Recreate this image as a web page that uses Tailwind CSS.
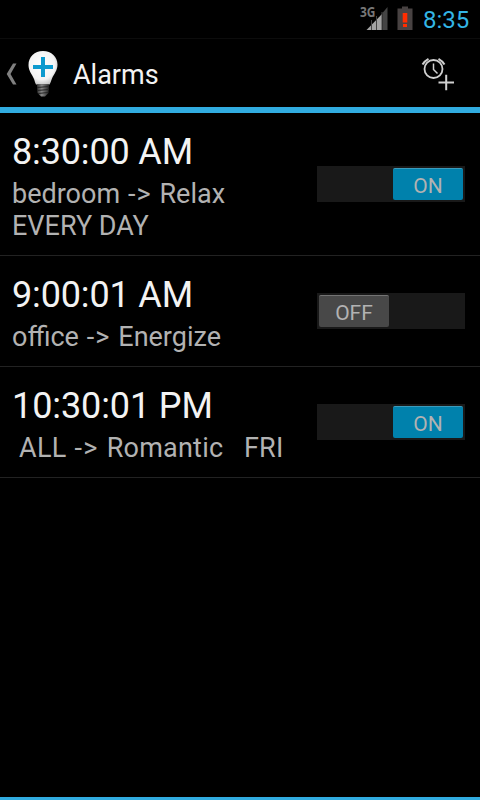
<!DOCTYPE html>
<html lang="en">
<head>
<meta charset="utf-8">
<title>Alarms</title>
<script src="https://cdn.jsdelivr.net/npm/@tailwindcss/browser@4"></script>
</head>
<body class="bg-black">
<div class="w-[480px] h-[800px] bg-black flex flex-col overflow-hidden font-[Roboto,sans-serif] text-[#f3f3f3]">
  <div class="h-[38px] shrink-0 flex justify-end items-start pr-[10px]">
    <svg class="w-[30px] h-[38px]" viewBox="0 0 30 38">
      <text x="2" y="17" font-family="Open Sans, sans-serif" font-weight="700" font-size="13.500" textLength="15.500" lengthAdjust="spacingAndGlyphs" fill="#777">3G</text>
      <path d="M8.500 30 24 14V30Z" fill="#a3a3a3"/>
      <path d="M24.500 13 29.500 7V30H24.500Z" fill="#444"/>
      <path d="M13.500 20V30M18.500 16V30M24 12V30" stroke="#444" stroke-width="1"/>
    </svg>
    <svg class="w-[16px] h-[38px] ml-[9px]" viewBox="0 0 16 38">
      <path d="M5 6.500h6v2h4.500v21.500H.5V8.500H5Z" fill="#484242"/>
      <path d="M5.700 13h4.600V22.500H5.700ZM6 24h4V27h-4Z" fill="#ff2d00"/>
    </svg>
    <div class="ml-[10px] mt-[5px] w-[47px] text-[24px] leading-[30px] text-[#33b5e5] whitespace-nowrap">8:35</div>
  </div>
  <div class="h-[75px] shrink-0 border-t border-t-[#0c0c0c] border-b-[6px] border-b-[#31ace0] flex items-center">
    <svg class="w-[70px] h-[68px] shrink-0" viewBox="0 0 70 68">
      <defs>
        <radialGradient id="bulb" cx=".45" cy=".4" r=".65"><stop offset="0" stop-color="#fff"/><stop offset=".7" stop-color="#f3f3f3"/><stop offset="1" stop-color="#bdbdbd"/></radialGradient>
        <linearGradient id="base"><stop offset="0" stop-color="#333"/><stop offset=".4" stop-color="#888"/><stop offset="1" stop-color="#222"/></linearGradient>
      </defs>
      <path d="M13 24.500H16.500L10.500 35 16.500 45.500H13L6.700 35Z" fill="#808080"/>
      <path d="M43 12C34.500 12 28.500 18 28.500 26C28.500 32 32 35 34 40C35 42.500 35 44 36 45.500H49.500C50.500 44 51 42 52 39.500C54 35 57.500 31.500 57.500 25.500C57.500 18 51.500 12 43 12Z" fill="url(#bulb)"/>
      <path d="M37 45.500H49L48.500 54 45 57.500H41L37.500 54Z" fill="url(#base)"/>
      <path d="M37 48.500 49 47.500M37 51.500 49 50.500M38 54.500 48 53.500" stroke="#252525" stroke-width="1"/>
      <path d="M33 28H53M43 18V38" stroke="#0d9ace" stroke-width="4" fill="none"/>
    </svg>
    <div class="ml-[3px] mt-[3px] text-[27px] leading-[32px]">Alarms</div>
    <svg class="w-[40px] h-[40px] ml-auto mr-[22px]" viewBox="0 0 40 40" fill="none" stroke="#d0d0d0">
      <circle cx="15.500" cy="16" r="9" stroke-width="1.800"/>
      <path d="M15.500 10.500V16.500L19.500 20.500" stroke-width="1.500"/>
      <path d="M4.500 11.500Q6.500 8 10.500 5.800M20.500 5.800Q24.500 8 26.500 11.500" stroke-width="2"/>
      <path d="M20.500 29.500H36M28.200 21.700V37.300" stroke-width="2"/>
    </svg>
  </div>
  <div class="h-[143px] shrink-0 border-b border-[#222] flex items-center justify-between pl-[12px] pr-[15px]">
    <div class="pt-[5px]">
      <div class="text-[36px] leading-[42px] tracking-[-0.15px]">8:30:00 AM</div>
      <div class="mt-[5px] -mb-[5px] pb-[5px] text-[27px] leading-[32px] text-[#b2b2b2]">bedroom<span class="tracking-[1.1px]"> -&gt; </span>Relax<br>EVERY DAY</div>
    </div>
    <div class="w-[148px] h-[36px] bg-[#191919] flex justify-end p-[2px]">
      <div class="w-[70px] h-[32px] rounded-[2px] bg-[#0081ac] border-t border-[#3c9cbd] text-[#b2b2b2] text-[21px] leading-[35px] text-center">ON</div>
    </div>
  </div>
  <div class="h-[111px] shrink-0 border-b border-[#222] flex items-center justify-between pl-[12px] pr-[15px]">
    <div class="pt-[5px]">
      <div class="text-[36px] leading-[42px] tracking-[-0.15px]">9:00:01 AM</div>
      <div class="mt-[5px] -mb-[5px] pb-[5px] text-[27px] leading-[32px] text-[#b2b2b2]">office<span class="tracking-[1.1px]"> -&gt; </span>Energize</div>
    </div>
    <div class="w-[148px] h-[36px] bg-[#191919] flex p-[2px]">
      <div class="w-[70px] h-[32px] rounded-[2px] bg-[#484848] border-t border-[#747474] text-[#b2b2b2] text-[21px] leading-[35px] text-center">OFF</div>
    </div>
  </div>
  <div class="h-[111px] shrink-0 border-b border-[#222] flex items-center justify-between pl-[12px] pr-[15px]">
    <div class="pt-[5px]">
      <div class="text-[36px] leading-[42px] tracking-[-0.1px]">10:30:01 PM</div>
      <div class="mt-[5px] -mb-[5px] pb-[5px] text-[27px] leading-[32px] text-[#b2b2b2] whitespace-pre"><span class="tracking-[0.3px]"> ALL</span><span class="tracking-[1.3px]"> -&gt; </span><span class="tracking-[0.2px]">Romantic   FRI</span></div>
    </div>
    <div class="w-[148px] h-[36px] bg-[#191919] flex justify-end p-[2px]">
      <div class="w-[70px] h-[32px] rounded-[2px] bg-[#0081ac] border-t border-[#3c9cbd] text-[#b2b2b2] text-[21px] leading-[35px] text-center">ON</div>
    </div>
  </div>
  <div class="mt-auto h-[3px] shrink-0 bg-[#31ace0]"></div>
</div>
</body>
</html>
